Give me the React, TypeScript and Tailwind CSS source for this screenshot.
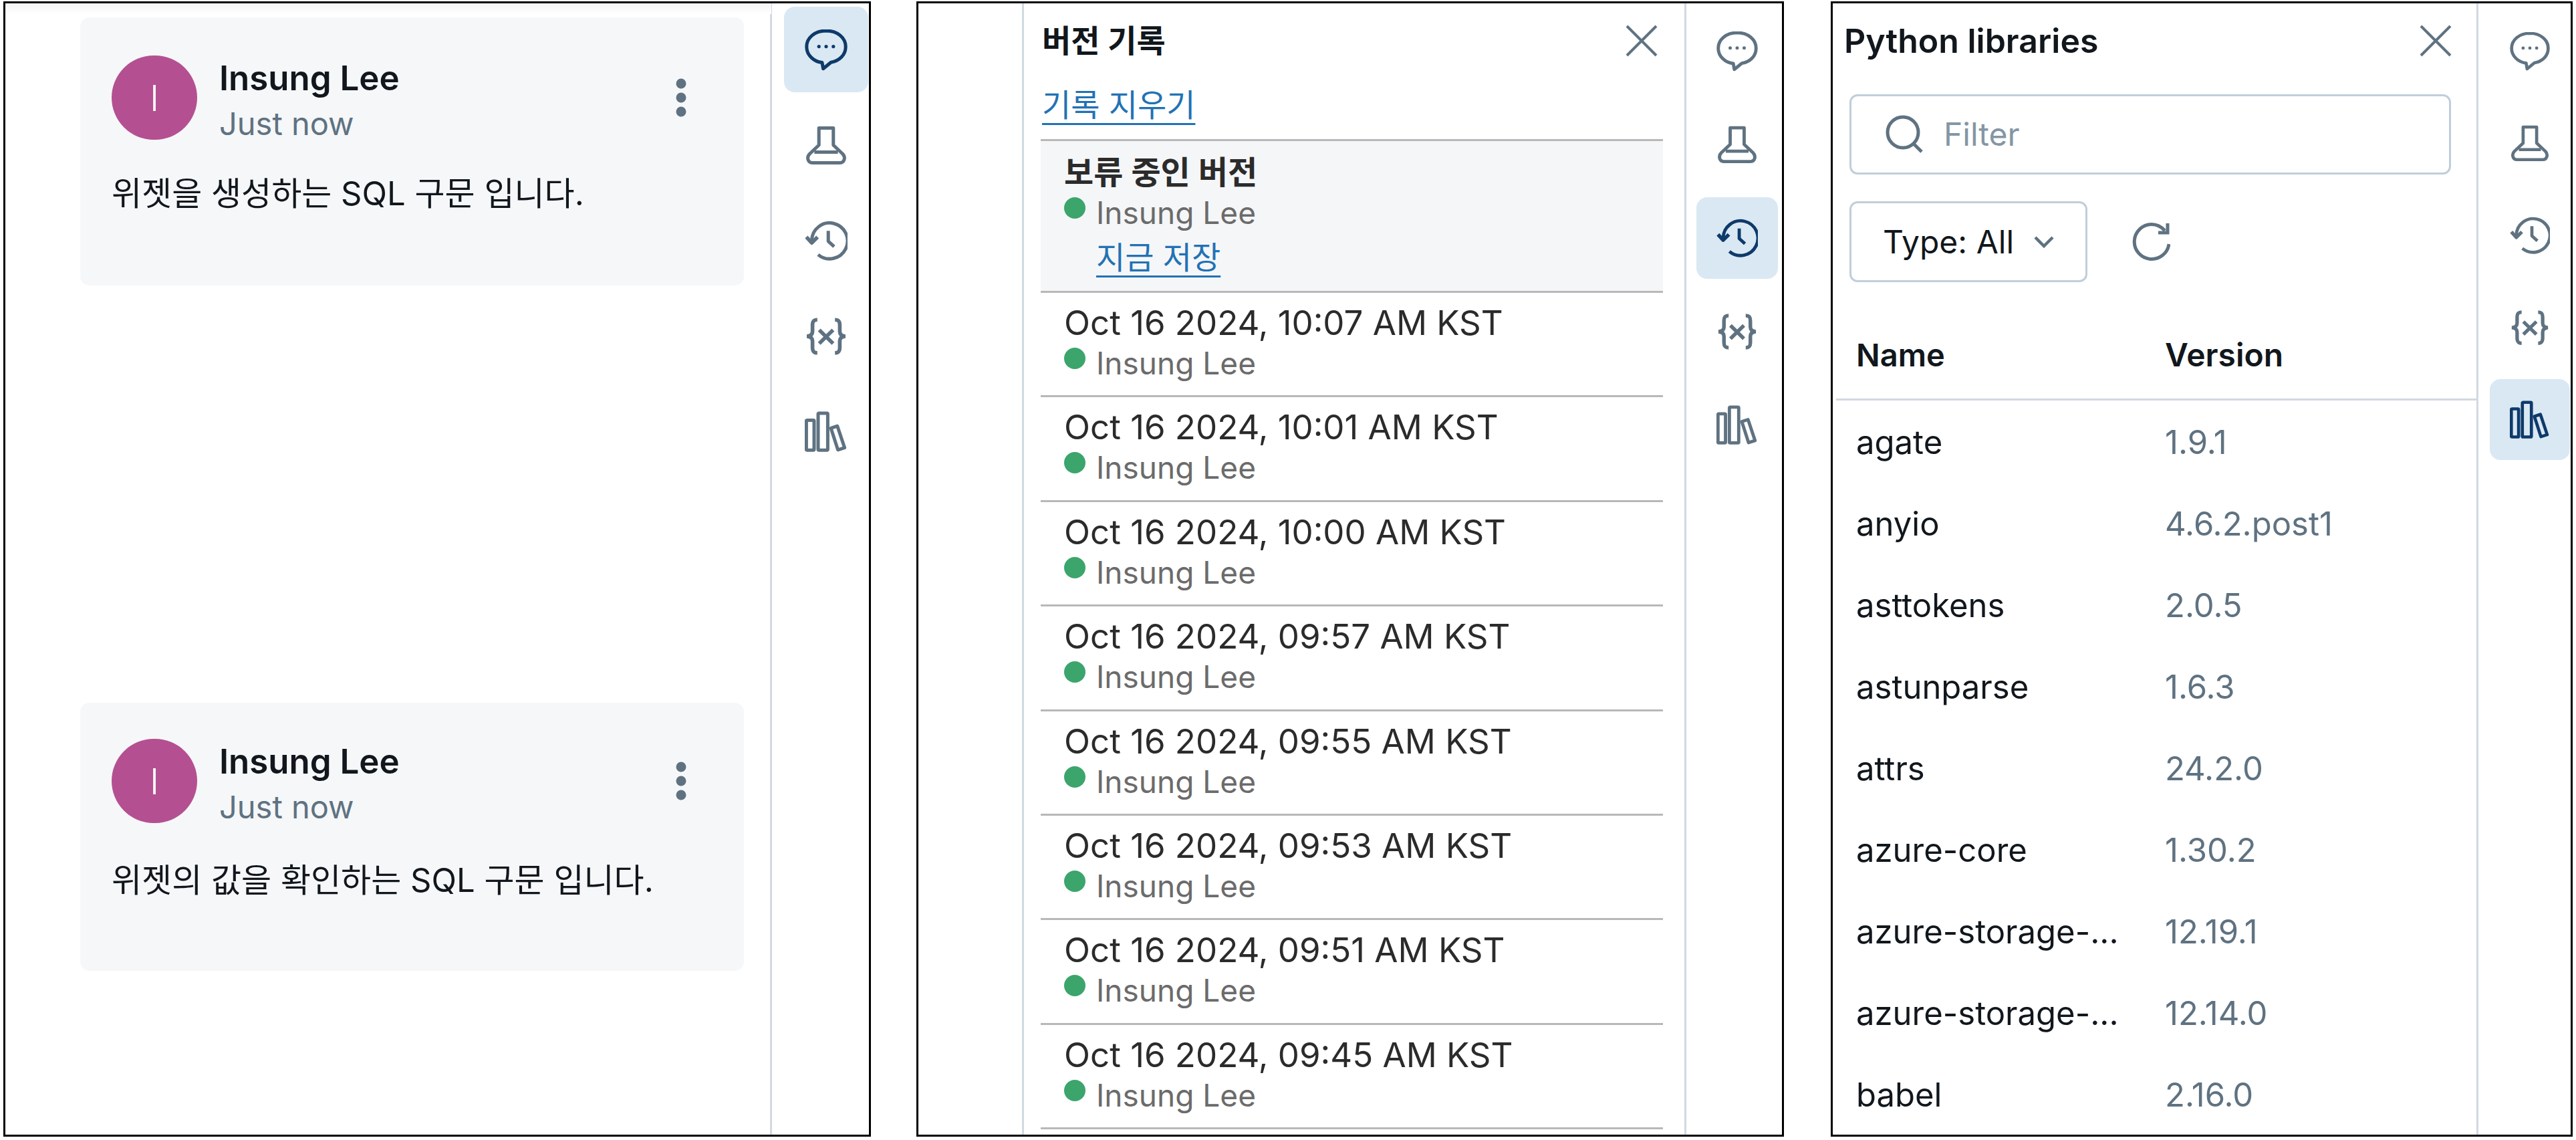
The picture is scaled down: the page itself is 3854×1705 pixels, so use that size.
import React from 'react';

const sans = 'Inter, "Noto Sans CJK KR", sans-serif';

const BubbleIcon = ({ size }: { size: number }) => (
  <svg width={size} height={size} viewBox="0 0 16 16" fill="none" stroke="currentColor" strokeWidth="1.25" strokeLinejoin="round">
    <path d="M8 1C3.8 1 .7 3.6 .7 7c0 3.2 2.8 5.6 5.8 5.9L6.9 15.2 9.8 12.8C13 12.3 15.3 10 15.3 7 15.3 3.6 12.2 1 8 1Z" />
    <circle cx="5.3" cy="6.9" r=".65" fill="currentColor" stroke="none" />
    <circle cx="8" cy="6.9" r=".65" fill="currentColor" stroke="none" />
    <circle cx="10.7" cy="6.9" r=".65" fill="currentColor" stroke="none" />
  </svg>
);

const FlaskIcon = ({ size }: { size: number }) => (
  <svg width={size} height={size} viewBox="0 0 16 16" fill="none" stroke="currentColor" strokeWidth="1.25" strokeLinejoin="round">
    <path d="M5.3 1.6H10.7V8L14.2 11.3C15.4 12.6 14.8 14.6 13.2 14.6H2.8C1.2 14.6 .6 12.6 1.8 11.3L5.3 8Z" />
    <path d="M3.6 10.6H12.4" />
  </svg>
);

const HistoryIcon = ({ size }: { size: number }) => (
  <svg width={size} height={size} viewBox="0 0 16 16" fill="none" stroke="currentColor" strokeWidth="1.25" strokeLinejoin="round">
    <path d="M2.6 8A6.7 6.7 0 1 1 5 13.2" />
    <path d="M.6 6.6 2.6 8.8 4.8 6.6" strokeWidth="1.4" />
    <path d="M8.8 4.3V8.2L11 10.2" />
  </svg>
);

const VariableIcon = ({ size }: { size: number }) => (
  <svg width={size} height={size} viewBox="0 0 16 16" fill="none" stroke="currentColor" strokeWidth="1.4">
    <path d="M4.7 1.8C3.3 1.8 2.9 2.5 2.9 3.8V6.2C2.9 7.2 2.3 7.9 .8 8 2.3 8.1 2.9 8.8 2.9 9.8V12.2C2.9 13.5 3.3 14.2 4.7 14.2" />
    <path d="M11.3 1.8C12.7 1.8 13.1 2.5 13.1 3.8V6.2C13.1 7.2 13.7 7.9 15.2 8 13.7 8.1 13.1 8.8 13.1 9.8V12.2C13.1 13.5 12.7 14.2 11.3 14.2" />
    <path d="M5.4 5.6 10.6 10.7M10.6 5.6 5.4 10.7" />
  </svg>
);

const LibraryIcon = ({ size }: { size: number }) => (
  <svg width={size} height={size} viewBox="0 0 16 16" fill="none" stroke="currentColor" strokeWidth="1.25" strokeLinejoin="round">
    <rect x=".6" y="3.6" width="2.9" height="11.2" rx=".3" />
    <rect x="5" y="1" width="3.6" height="13.8" rx=".3" />
    <path d="M9.8 6.6 12.2 5.8 14.9 13.9 12.4 14.7Z" />
  </svg>
);

const CloseIcon = () => (
  <svg width="48" height="48" viewBox="0 0 48 48" fill="none" stroke="#5f7281" strokeWidth="4">
    <path d="M2 2 46 46M46 2 2 46" />
  </svg>
);

const railIcons = [BubbleIcon, FlaskIcon, HistoryIcon, VariableIcon, LibraryIcon];

const Rail = ({ active, btn, gap, pad, size }: { active: number; btn: string; gap: string; pad: string; size: number }) => (
  <div className={`flex flex-col shrink-0 border-l-[3px] border-[#d1d9e1] h-full ${gap} ${pad}`}>
    {railIcons.map((Icon, i) => (
      <div
        key={i}
        className={`flex items-center justify-center rounded-[16px] ${btn} ${i === active ? 'bg-[#dae8f3] text-[#0e3a6a]' : 'text-[#5f7281]'}`}
      >
        <Icon size={size} />
      </div>
    ))}
  </div>
);

const CommentCard = ({ text, className, bodyClass }: { text: string; className: string; bodyClass: string }) => (
  <div className={`w-[993px] h-[401px] rounded-[14px] bg-[#f6f7f9] pl-[47px] pr-[86px] ${className}`}>
    <div className="flex items-start">
      <div className="w-[128px] h-[126px] rounded-full bg-[#b45091] flex items-center justify-center text-white text-[54px] font-light">I</div>
      <div className="ml-[33px] flex-1 flex flex-col">
        <div className="text-[51px] leading-[68px] font-semibold text-[#11171c]">Insung Lee</div>
        <div className="text-[47px] leading-[68px] text-[#5f7281]">Just now</div>
      </div>
      <svg className="mt-[34px]" width="16" height="58" viewBox="0 0 16 58" fill="#5f7281">
        <circle cx="8" cy="8" r="7.5" />
        <circle cx="8" cy="29" r="7.5" />
        <circle cx="8" cy="50" r="7.5" />
      </svg>
    </div>
    <div className={`text-[49px] leading-[66px] text-[#11171c] ${bodyClass}`}>{text}</div>
  </div>
);

const Author = () => (
  <div className="flex items-center h-[60px]">
    <span className="w-[32px] h-[32px] rounded-full bg-[#3ba56c] mb-[14px]" />
    <span className="ml-[16px] text-[46px] leading-[60px] text-[#6b6b6b]">Insung Lee</span>
  </div>
);

const versions = ['10:07', '10:01', '10:00', '09:57', '09:55', '09:53', '09:51', '09:45'];

const libraries = [
  ['agate', '1.9.1'],
  ['anyio', '4.6.2.post1'],
  ['asttokens', '2.0.5'],
  ['astunparse', '1.6.3'],
  ['attrs', '24.2.0'],
  ['azure-core', '1.30.2'],
  ['azure-storage-...', '12.19.1'],
  ['azure-storage-...', '12.14.0'],
  ['babel', '2.16.0'],
];

export default function App() {
  return (
    <div className="flex h-[1705px] w-[3854px] bg-white pt-[2px] pl-[5px]" style={{ fontFamily: sans }}>
      {/* Comments */}
      <div className="relative flex w-[1298px] h-[1698px] border-[3px] border-black overflow-hidden">
        <div className="absolute top-0 left-0 w-[1146px] h-[16px] bg-gradient-to-b from-[#f3f3f3] to-white" />
        <div className="relative flex-1 pl-[112px] pt-[21px]">
          <CommentCard text="위젯을 생성하는 SQL 구문 입니다." className="pt-[57px]" bodyClass="mt-[38px]" />
          <CommentCard text="위젯의 값을 확인하는 SQL 구문 입니다." className="pt-[54px] mt-[624px]" bodyClass="mt-[43px]" />
        </div>
        <Rail active={0} btn="w-[126px] h-[128px]" gap="gap-[15px]" pad="pl-[18px] pr-[1px] pt-[5px]" size={64} />
      </div>

      {/* Version history */}
      <div className="flex ml-[68px] w-[1298px] h-[1698px] border-[3px] border-black overflow-hidden">
        <div className="flex-1 ml-[155px] border-l-[3px] border-[#d1d9e1] pl-[25px] pr-[32px]">
          <div className="flex items-center justify-between h-[116px] pl-[2px] pr-[8px] pb-[4px]">
            <span className="text-[47px] font-semibold text-[#11171c]">버전 기록</span>
            <CloseIcon />
          </div>
          <div className="h-[87px] pl-[2px] pt-[2px]">
            <span className="text-[47px] leading-[68px] text-[#2272b4] underline underline-offset-[10px] decoration-[3px]">기록 지우기</span>
          </div>
          <div className="h-[230px] border-y-[3px] border-[#b8b8b8] bg-[#f5f6f8] pl-[35px] pt-[16px]">
            <div className="text-[48px] leading-[61px] font-semibold text-[#2b2b2b]">보류 중인 버전</div>
            <Author />
            <div className="ml-[48px] mt-[3px] text-[47px] leading-[68px] text-[#2272b4] underline underline-offset-[10px] decoration-[3px]">지금 저장</div>
          </div>
          {versions.map((t) => (
            <div key={t} className="h-[156.4px] border-b-[3px] border-[#b8b8b8] pl-[35px] pt-[14px]">
              <div className="text-[51px] leading-[61px] text-[#2b2b2b]">{`Oct 16 2024, ${t} AM KST`}</div>
              <Author />
            </div>
          ))}
        </div>
        <Rail active={2} btn="w-[122px] h-[122px]" gap="gap-[18px]" pad="pl-[15px] pr-[6px] pt-[10px]" size={62} />
      </div>

      {/* Python libraries */}
      <div className="flex ml-[70px] w-[1110px] h-[1698px] border-[3px] border-black overflow-hidden">
        <div className="flex-1 pl-[5px]">
          <div className="flex items-center justify-between h-[116px] pl-[12px] pr-[37px] pb-[4px]">
            <span className="text-[50px] font-semibold text-[#11171c]">Python libraries</span>
            <CloseIcon />
          </div>
          <div className="ml-[20px] mr-[38px] mt-[20px] h-[120px] rounded-[12px] border-[3px] border-[#c0ceda] flex items-center pl-[50px]">
            <svg width="58" height="58" viewBox="0 0 58 58" fill="none" stroke="#5f7281" strokeWidth="5">
              <circle cx="27" cy="26" r="23" />
              <path d="M43 43 55 55" />
            </svg>
            <span className="ml-[30px] text-[48px] text-[#8396a5]">Filter</span>
          </div>
          <div className="flex items-center ml-[20px] mt-[40px]">
            <div className="flex items-center w-[356px] h-[121px] rounded-[12px] border-[3px] border-[#c0ceda] pl-[47px]">
              <span className="text-[48px] text-[#11171c]">Type: All</span>
              <svg className="ml-[30px]" width="30" height="18" viewBox="0 0 30 18" fill="none" stroke="#5f7281" strokeWidth="4.5">
                <path d="M2 2 15 15 28 2" />
              </svg>
            </div>
            <svg className="ml-[66px]" width="58" height="58" viewBox="0 0 58 58" fill="none" stroke="#5f7281" strokeWidth="5">
              <path d="M50 12C44 5.500 37 2.500 30 2.500A26 26 0 1 0 56 32" />
              <path d="M54 1V15H40" />
            </svg>
          </div>
          <div className="flex items-center h-[177px] pt-[44px] pl-[30px] border-b-[3px] border-[#d1d9e1]">
            <span className="w-[462px] text-[47px] font-semibold text-[#11171c]">Name</span>
            <span className="text-[48px] font-semibold text-[#11171c]">Version</span>
          </div>
          <div className="mt-[2px]">
            {libraries.map(([name, version]) => (
              <div key={version} className="flex items-center h-[122px] pl-[30px]">
                <span className="w-[462px] text-[49px] text-[#11171c]">{name}</span>
                <span className="text-[49px] text-[#5f7281]">{version}</span>
              </div>
            ))}
          </div>
        </div>
        <Rail active={4} btn="w-[120px] h-[121px]" gap="gap-[17px]" pad="pl-[17px] pr-[1px] pt-[10px]" size={60} />
      </div>
    </div>
  );
}
